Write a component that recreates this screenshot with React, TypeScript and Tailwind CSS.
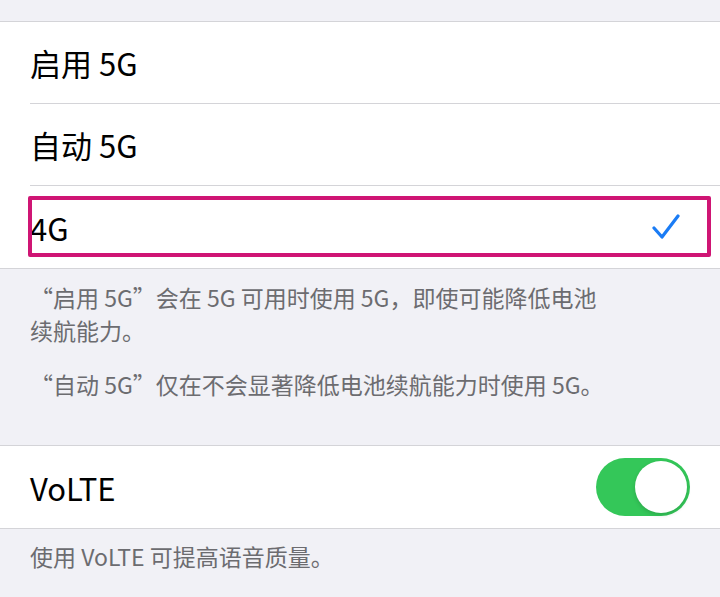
const font = { fontFamily: '"Noto Sans CJK SC", "Noto Sans", sans-serif' }

function Row({ children, last }: { children: React.ReactNode; last?: boolean }) {
  return (
    <div className="pl-[30px]">
      <div className={`h-[82px] flex items-center pr-[30px] ${last ? '' : 'border-b border-[#d4d4d8]'}`}>
        {children}
      </div>
    </div>
  )
}

export default function App() {
  return (
    <div className="w-[720px] h-[597px] bg-[#f1f1f6] overflow-hidden text-black" style={font}>
      <div className="h-[21px]" />

      <div className="bg-white border-y border-[#d4d4d8]">
        <Row>
          <span className="text-[31px] leading-none">启用 5G</span>
        </Row>
        <Row>
          <span className="text-[31px] leading-none">自动 5G</span>
        </Row>
        <div className="relative">
          <Row last>
            <span className="text-[31px] leading-none flex-1">4G</span>
            <svg width="28" height="26" viewBox="0 0 28 26" className="text-[#1a7cf5] mr-[10px]">
              <path d="M2 14 L10 23 L26 2" fill="none" stroke="currentColor" strokeWidth="3.2" strokeLinecap="round" strokeLinejoin="round" />
            </svg>
          </Row>
          {/* 标注框 */}
          <div className="absolute left-[28px] right-[9px] top-[10px] h-[61px] border-[4px] border-[#cf1574] rounded-[2px] pointer-events-none" />
        </div>
      </div>

      <div className="px-[30px] pt-[12px] pb-[44px] text-[23px] leading-[33px] text-[#6c6c70] whitespace-nowrap">
        <p>“启用 5G”会在 5G 可用时使用 5G，即使可能降低电池<br />续航能力。</p>
        <p className="mt-[21px]">“自动 5G”仅在不会显著降低电池续航能力时使用 5G。</p>
      </div>

      <div className="bg-white border-y border-[#d4d4d8] h-[84px] pl-[30px] pr-[30px] flex items-center">
        <span className="text-[31px] leading-none flex-1">VoLTE</span>
        <div className="w-[94px] h-[58px] rounded-full bg-[#34c759] flex items-center justify-end pr-[3px]">
          <div className="w-[52px] h-[52px] rounded-full bg-white shadow-[0_2px_4px_rgba(0,0,0,0.15)]" />
        </div>
      </div>

      <div className="px-[30px] pt-[11px] text-[23px] leading-[33px] text-[#6c6c70]">
        <p>使用 VoLTE 可提高语音质量。</p>
      </div>
    </div>
  )
}
